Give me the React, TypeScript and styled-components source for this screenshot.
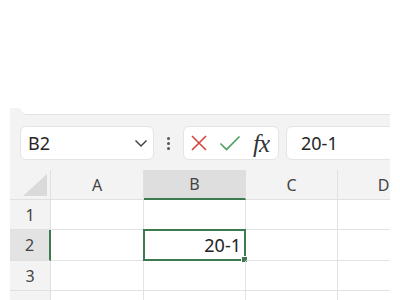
import React from "react";
import styled, { createGlobalStyle } from "styled-components";

const GlobalStyle = createGlobalStyle`
  body {
    margin: 0;
    background: #ffffff;
    font-family: "Noto Sans", "Open Sans", sans-serif;
  }
`;

const Page = styled.div`
  width: 400px;
  height: 300px;
  padding-top: 108px;
  box-sizing: border-box;
  overflow: hidden;
`;

const Frame = styled.div`
  margin: 0 10px;
  height: 192px;
  background: #f3f3f3;
  overflow: hidden;
`;

const Ribbon = styled.div`
  margin-left: 10px;
  height: 6px;
  background: #ffffff;
  border-bottom: 1px solid #e2e2e2;
  border-bottom-left-radius: 8px;
`;

const FormulaBar = styled.div`
  display: flex;
  align-items: center;
  padding: 11px 0 10px 10px;
  white-space: nowrap;
  & > * {
    flex-shrink: 0;
  }
`;

const Box = styled.div<{ $w?: number }>`
  width: ${(p) => (p.$w ? `${p.$w}px` : "auto")};
  height: 34px;
  box-sizing: border-box;
  background: #ffffff;
  border: 1px solid #e4e4e4;
  border-radius: 6px;
  display: flex;
  align-items: center;
`;

const NameText = styled.span`
  flex: 1;
  padding-left: 7px;
  font-size: 18px;
  color: #262626;
`;

const Chevron = styled.span`
  display: flex;
  margin-right: 5px;
`;

const Dots = styled.div`
  width: 29px;
  display: flex;
  flex-direction: column;
  align-items: center;
  gap: 2px;
  span {
    width: 3px;
    height: 3px;
    border-radius: 50%;
    background: #555;
  }
`;

const IconRow = styled.div`
  display: flex;
  align-items: center;
  padding-left: 6px;
  gap: 11px;
`;

const Fx = styled.span`
  font-family: "Liberation Serif", "DejaVu Serif", serif;
  font-style: italic;
  font-size: 25px;
  line-height: 1;
  color: #333;
  margin-left: 1px;
  letter-spacing: -1px;
`;

const FormulaInput = styled(Box)`
  margin-left: 7px;
  width: 200px;
  padding-left: 14px;
  font-size: 18px;
  color: #262626;
`;

const Grid = styled.div`
  display: grid;
  grid-template-columns: 41px 93px 102px 92px 92px;
  grid-template-rows: 30px 30px 31px 30px 30px;
  background: #ffffff;
`;

const Corner = styled.div`
  background: #f3f3f3;
  border-right: 1px solid #e0e0e0;
  border-bottom: 1px solid #e0e0e0;
  position: relative;
  svg {
    position: absolute;
    right: 3px;
    bottom: 3px;
  }
`;

const ColHead = styled.div<{ $sel?: boolean }>`
  background: ${(p) => (p.$sel ? "#dedede" : "#f3f3f3")};
  border-right: 1px solid #e0e0e0;
  border-bottom: ${(p) => (p.$sel ? "2px solid #3d7a50" : "1px solid #e0e0e0")};
  display: flex;
  align-items: center;
  justify-content: center;
  font-size: 16px;
  color: #444;
`;

const RowHead = styled.div<{ $sel?: boolean }>`
  background: ${(p) => (p.$sel ? "#e3e3e3" : "#f3f3f3")};
  border-right: ${(p) => (p.$sel ? "2px solid #3d7a50" : "1px solid #e0e0e0")};
  border-bottom: 1px solid #e0e0e0;
  display: flex;
  align-items: center;
  justify-content: center;
  font-size: 16px;
  color: #444;
`;

const Cell = styled.div<{ $sel?: boolean }>`
  position: relative;
  box-sizing: border-box;
  border-right: 1px solid #e3e3e3;
  border-bottom: 1px solid #e3e3e3;
  ${(p) =>
    p.$sel &&
    `
    border: 2px solid #3d7a50;
    margin: -1px 0 0 -1px;
  `}
  display: flex;
  align-items: center;
  justify-content: flex-end;
  padding-right: 3px;
  font-size: 18px;
  color: #222;
`;

const Handle = styled.span`
  position: absolute;
  right: -4px;
  bottom: -4px;
  width: 5px;
  height: 5px;
  background: #3d7a50;
  border: 1px solid #fff;
`;

const cols = ["A", "B", "C", "D"];

export default function App() {
  return (
    <>
      <GlobalStyle />
      <Page>
        <Frame>
          <Ribbon />
          <FormulaBar>
            <Box $w={134}>
              <NameText>B2</NameText>
              <Chevron>
                <svg width="14" height="9" viewBox="0 0 14 9">
                  <path d="M1.5 1.5 L7 7 L12.5 1.5" fill="none" stroke="#444" strokeWidth="1.5" />
                </svg>
              </Chevron>
            </Box>
            <Dots>
              <span />
              <span />
              <span />
            </Dots>
            <Box $w={96}>
              <IconRow>
                <svg width="18" height="18" viewBox="0 0 18 18">
                  <path d="M2 2 L16 16 M16 2 L2 16" stroke="#d6453d" strokeWidth="1.6" />
                </svg>
                <svg width="22" height="18" viewBox="0 0 22 18">
                  <path d="M1.5 9.5 L7.5 15.5 L20.5 2.5" fill="none" stroke="#4aa05c" strokeWidth="1.6" />
                </svg>
                <Fx>fx</Fx>
              </IconRow>
            </Box>
            <FormulaInput>20-1</FormulaInput>
          </FormulaBar>
          <Grid>
            <Corner>
              <svg width="24" height="22" viewBox="0 0 24 22">
                <polygon points="24,0 24,22 0,22" fill="#dadada" />
              </svg>
            </Corner>
            {cols.map((c) => (
              <ColHead key={c} $sel={c === "B"}>
                {c}
              </ColHead>
            ))}
            {[1, 2, 3, 4].map((r) => (
              <React.Fragment key={r}>
                <RowHead $sel={r === 2}>{r < 4 ? r : null}</RowHead>
                {cols.map((c) => {
                  const sel = r === 2 && c === "B";
                  return (
                    <Cell key={c} $sel={sel}>
                      {sel && "20-1"}
                      {sel && <Handle />}
                    </Cell>
                  );
                })}
              </React.Fragment>
            ))}
          </Grid>
        </Frame>
      </Page>
    </>
  );
}
